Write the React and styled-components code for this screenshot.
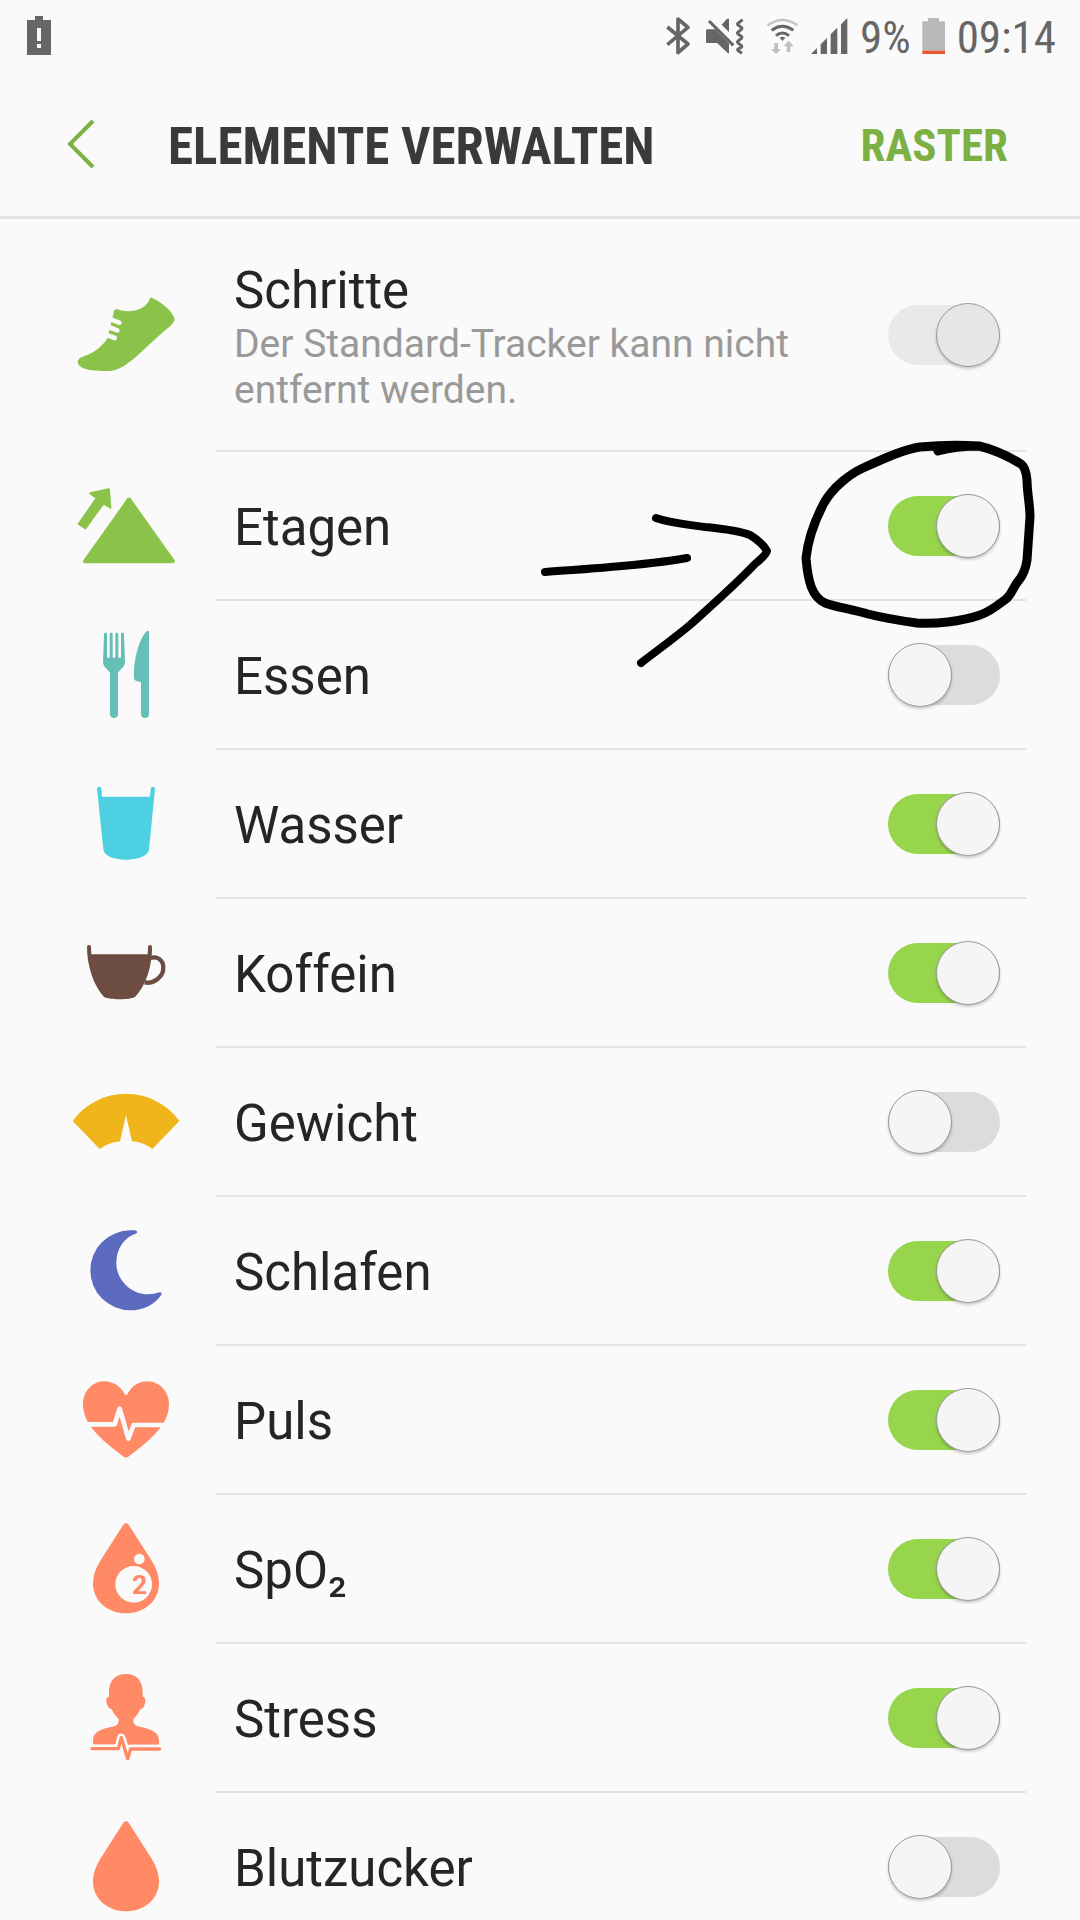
import React, { Component } from "react";
import styled, { createGlobalStyle } from "styled-components";

const GlobalStyle = createGlobalStyle`
  *,
  *::before {
    box-sizing: border-box;
  }
  body {
    margin: 0;
    background: #fafafa;
    font-family: Roboto, "Liberation Sans", sans-serif;
  }
`;

const Screen = styled.div`
  display: flex;
  flex-direction: column;
  height: 100vh;
  background: #fafafa;
  color: #252525;
`;

const StatusBar = styled.div`
  display: flex;
  align-items: center;
  justify-content: space-between;
  height: 72px;
  padding: 0 24px;
  flex-shrink: 0;
`;

const StatusGroup = styled.div`
  display: flex;
  align-items: center;
  gap: 11px;
`;

const StatusIcon = styled.svg`
  display: block;
  height: 40px;
`;

const StatusText = styled.span`
  padding-top: 4px;
  font-family: "Roboto Condensed", Roboto, sans-serif;
  font-size: 45px;
  line-height: 48px;
  color: #666;
`;

const Header = styled.header`
  display: flex;
  align-items: center;
  height: 147px;
  padding: 0 72px 0 48px;
  border-bottom: 3px solid #e5e5e5;
  flex-shrink: 0;
`;

const BackButton = styled.button`
  display: flex;
  justify-content: center;
  width: 66px;
  margin-right: 54px;
  padding: 0;
  border: 0;
  background: none;
`;

const Title = styled.h1`
  flex: 1;
  margin: 0;
  padding-top: 6px;
  font-family: "Roboto Condensed", Roboto, sans-serif;
  font-size: 51px;
  font-weight: 700;
  line-height: 60px;
  color: #3a3a3a;
`;

const GridButton = styled.button`
  padding: 3px 0 0;
  border: 0;
  background: none;
  font-family: "Roboto Condensed", Roboto, sans-serif;
  font-size: 45px;
  font-weight: 700;
  line-height: 60px;
  color: #7cb043;
`;

const List = styled.ul`
  flex: 1;
  min-height: 0;
  margin: 0;
  padding: 0;
  list-style: none;
  overflow-y: auto;
  scrollbar-width: none;
`;

const Row = styled.li`
  position: relative;
  display: grid;
  grid-template-columns: 216px 1fr;
  padding-right: 54px;
`;

const IconCell = styled.div`
  display: flex;
  align-items: center;
  padding: 0 0 2px 72px;
`;

const TrackerIcon = styled.svg`
  display: block;
  width: 108px;
  height: 108px;
`;

const RowBody = styled.label`
  display: flex;
  align-items: center;
  justify-content: space-between;
  min-height: 149px;
  padding: 37px 26px 37px 18px;
  border-bottom: 2px solid #e4e4e4;
`;

const Labels = styled.span`
  flex: 1;
  display: flex;
  flex-direction: column;
  padding-top: 5px;
`;

const Name = styled.span`
  font-size: 51px;
  line-height: 60px;
`;

const Hint = styled.span`
  font-size: 39px;
  line-height: 46px;
  color: #999;
`;

const Switch = styled.input`
  appearance: none;
  display: flex;
  align-items: center;
  justify-content: flex-start;
  width: 112px;
  height: 60px;
  margin: 0;
  border-radius: 30px;
  background: #dcdcdc;
  flex-shrink: 0;

  &::before {
    content: "";
    width: 64px;
    height: 64px;
    border: 1px solid #9a9a9a;
    border-radius: 50%;
    background: #f5f5f5;
    box-shadow: 0 2px 3px rgba(0, 0, 0, 0.2);
    flex-shrink: 0;
  }

  &:checked {
    justify-content: flex-end;
    background: #97d54d;
  }

  &:disabled {
    background: #e9e9e9;
  }

  &:disabled::before {
    background: #e6e6e6;
  }
`;

// pen marks lie over the list, so they do not take part in the layout
const PenMarks = styled.svg`
  position: absolute;
  top: -22px;
  right: 40px;
  width: 500px;
  height: 240px;
  z-index: 1;
  pointer-events: none;
`;

const Shoe = () => (
  <TrackerIcon viewBox="96 32 324 324" fill="#8bc34a">
    <path d="M222 122Q224 115 231 117C262 128 316 126 330 84Q332 80 337 83C370 98 398 125 404 146Q403 158 384 173C350 200 310 240 285 262C262 281 236 299 215 301C170 304 114 300 113 275C116 254 150 262 185 225Q197 214 202 205Z" />
    <path
      d="M212 147L238 157M206 170L232 180M198 193L224 203"
      stroke="#fafafa"
      strokeWidth="14"
      strokeLinecap="round"
    />
  </TrackerIcon>
);

const Mountain = () => (
  <TrackerIcon viewBox="96 604 324 324" fill="#8bc34a">
    <path d="M130 869L262 683Q267 678 272 683L404 869Q406 877 398 878H135Q127 877 130 869Z" />
    <path d="M112 761L166 683L149 671Q146 667 150 665L205 653Q209 652 210 657L214 711Q213 716 209 713L191 702L137 777Z" />
  </TrackerIcon>
);

const Cutlery = () => (
  <TrackerIcon viewBox="96 32 324 324" fill="#65bfb7">
    <path d="M189 155L192 71a4.5 4.5 0 0 1 9 0V139a4 4 0 0 0 8 0V71a4.5 4.5 0 0 1 9 0V139a4 4 0 0 0 8 0V71a4.5 4.5 0 0 1 9 0V139a4 4 0 0 0 8 0V71a4.5 4.5 0 0 1 9 0L255 155C255 172 236 180 234 188V311a12 12 0 0 1-24 0V188C208 180 189 172 189 155Z" />
    <path d="M327 66V311a12 12 0 0 1-24 0V215C290 213 282 211 282 203C280 150 296 90 318 64Q327 58 327 66Z" />
  </TrackerIcon>
);

const Glass = () => (
  <TrackerIcon viewBox="96 478 324 324" fill="#4dd0e1">
    <path d="M171 535a6.5 6.5 0 0 1 13 0L186 558H330L332 535a6.5 6.5 0 0 1 13 0L327 715C325 738 290 747 258 747C226 747 192 738 190 715Z" />
  </TrackerIcon>
);

const Cup = () => (
  <TrackerIcon viewBox="96 26 324 324" fill="#6d4c41">
    <path d="M141 110a6 6 0 0 1 12 0L154 132H323L324 110a6 6 0 0 1 12 0C337 170 315 230 285 260C270 269 208 269 192 260C160 225 141 165 141 110Z" />
    <path
      d="M332 143C350 137 370 147 370 172C370 200 340 222 314 216"
      fill="none"
      stroke="#6d4c41"
      strokeWidth="13"
    />
  </TrackerIcon>
);

const Scale = () => (
  <TrackerIcon viewBox="96 472 324 324" fill="#f0b51a">
    <path d="M98 631A197 197 0 0 1 418 631L337 715Q310 694 276 692L258 614L240 692Q205 696 179 715Z" />
  </TrackerIcon>
);

const Moon = () => (
  <TrackerIcon viewBox="96 20 324 324" fill="#5c6bc0">
    <path d="M286 60Q294 63 290 69C250 82 229 118 229 158C229 210 275 252 322 252Q341 252 359 246Q367 245 364 253C345 282 310 300 271 300A120 120 0 0 1 271 60Z" />
  </TrackerIcon>
);

const Heart = () => (
  <TrackerIcon viewBox="96 466 324 324" fill="#ff8a65">
    <path d="M253 549C242 528 220 512 192 512C155 512 129 545 129 580C129 640 180 684 249 737Q258 744 267 737C336 684 387 640 387 580C387 545 360 512 322 512C295 512 274 528 263 549Q258 556 253 549Z" />
    <path
      d="M130 641H224L239 594L265 684L281 643H386"
      fill="none"
      stroke="#fafafa"
      strokeWidth="14"
      strokeLinejoin="round"
    />
  </TrackerIcon>
);

const dropPath =
  "M250 73Q258 65 266 73L335 181C350 206 357 228 357 250C357 303 310 339 258 339C206 339 159 303 159 250C159 228 166 206 181 181Z";

const OxygenDrop = () => (
  <TrackerIcon viewBox="96 44 324 324" fill="#ff8a65">
    <path d={dropPath} />
    <circle cx="298" cy="176" r="16" fill="#fafafa" />
    <circle cx="281" cy="252" r="55" fill="#fafafa" />
    <text x="276" y="282" fontFamily="Roboto, sans-serif" fontSize="80" fontWeight="700">
      2
    </text>
  </TrackerIcon>
);

const Drop = () => (
  <TrackerIcon viewBox="96 44 324 324" fill="#ff8a65">
    <path d={dropPath} />
  </TrackerIcon>
);

const Person = () => (
  <TrackerIcon viewBox="96 490 324 324" fill="#ff8a65">
    <path d="M258 520C290 520 308 540 308 575V588Q317 588 316 602Q314 624 301 626Q295 642 280 656Q278 670 290 676C325 684 357 690 357 720V732H159V720C159 690 190 684 226 676Q238 670 236 656Q221 642 215 626Q202 624 199 602Q198 588 207 588V575C207 540 226 520 258 520Z" />
    <path
      d="M156 744H235L244 711L263 774L272 745H359"
      fill="none"
      stroke="#fafafa"
      strokeWidth="25"
      strokeLinejoin="round"
    />
    <path
      d="M156 744H235L244 711L263 774L272 745H359"
      fill="none"
      stroke="#ff8a65"
      strokeWidth="10"
      strokeLinejoin="round"
      strokeLinecap="round"
    />
  </TrackerIcon>
);

const trackers = [
  {
    id: "steps",
    name: "Schritte",
    hint: "Der Standard-Tracker kann nicht entfernt werden.",
    icon: Shoe,
    on: true,
    locked: true
  },
  { id: "floors", name: "Etagen", icon: Mountain, on: true, marked: true },
  { id: "food", name: "Essen", icon: Cutlery, on: false },
  { id: "water", name: "Wasser", icon: Glass, on: true },
  { id: "caffeine", name: "Koffein", icon: Cup, on: true },
  { id: "weight", name: "Gewicht", icon: Scale, on: false },
  { id: "sleep", name: "Schlafen", icon: Moon, on: true },
  { id: "pulse", name: "Puls", icon: Heart, on: true },
  { id: "spo2", name: "SpO₂", icon: OxygenDrop, on: true },
  { id: "stress", name: "Stress", icon: Person, on: true },
  { id: "sugar", name: "Blutzucker", icon: Drop, on: false }
];

const Marks = () => (
  <PenMarks
    viewBox="540 430 500 240"
    fill="none"
    stroke="#000"
    strokeWidth="8"
    strokeLinecap="round"
    strokeLinejoin="round"
    aria-hidden="true"
  >
    <path
      d="M938 451C952 447 968 446 979 446C992 449 1008 456 1021 464Q1026 468 1027 480C1027 492 1030 505 1030 517C1029 530 1028 545 1027 560Q1025 573 1019 580C1013 587 1012 594 1006 599C998 605 990 612 980 615C960 622 935 624 917 623C895 620 880 617 868 614C850 609 836 607 825 603C812 597 808 582 806 558C808 540 815 520 824 503C833 487 850 474 863 468C885 458 905 449 920 447Q950 444 979 446"
      strokeWidth="9"
    />
    <path d="M545 572C570 570 590 569 610 567C635 565 665 562 687 558" />
    <path d="M656 518C670 523 690 525 705 527C725 529 740 531 750 535C758 540 764 545 767 551Q766 555 755 564C735 585 710 607 690 625C672 640 655 652 641 663" />
  </PenMarks>
);

const StatusIcons = () => (
  <StatusGroup>
    <StatusIcon viewBox="72 48 93 120" width="31">
      <path
        d="M82 81L144 132L114 158V57L144 82L82 134"
        fill="none"
        stroke="#666"
        strokeWidth="11"
        strokeLinejoin="round"
      />
    </StatusIcon>
    <StatusIcon viewBox="198 48 123 120" width="41" fill="#666">
      <path d="M202 88H226L267 130V160H264L231 129H202Q198 129 198 125V92Q198 88 202 88ZM245 74L261 56H267V96Z" />
      <path
        d="M207 63L280 136M308 59L294 70Q291 72 294 75L304 82Q307 85 304 88L294 96Q291 99 294 102L304 109Q307 112 304 115L294 123Q291 126 294 129L304 137Q307 140 304 142L294 147Q291 150 295 152L306 160"
        fill="none"
        stroke="#666"
        strokeWidth="9"
      />
    </StatusIcon>
    <StatusIcon viewBox="354 48 126 120" width="42" fill="#666">
      <path d="M383 76Q427 44 472 76" fill="none" stroke="#c4c4c4" strokeWidth="8" />
      <path
        d="M395 91Q427 67 460 91M408 107Q427 91 447 107"
        fill="none"
        stroke="#666"
        strokeWidth="9"
      />
      <path d="M419 113Q427 108 436 113L427 123Z" />
      <path
        d="M403 129H414V147H423L408 163L394 147H403ZM446 122L461 139H451V156H440V139H431Z"
        fill="#c0c0c0"
      />
    </StatusIcon>
    <StatusIcon viewBox="512 48 114 120" width="38" fill="#666">
      <path d="M512 162L530 144V162ZM541 133L560 114V162H541ZM571 103L591 83V162H571ZM602 73L621 54V162H602Z" />
    </StatusIcon>
    <StatusText>9%</StatusText>
    <StatusIcon viewBox="843 48 72 120" width="24">
      <path d="M861 54H894V64H912V152H844V64H861Z" fill="#b8b8b8" />
      <path d="M844 152H912V162H844Z" fill="#e8562a" />
    </StatusIcon>
    <StatusText>09:14</StatusText>
  </StatusGroup>
);

export default class App extends Component {
  state = {
    items: trackers
  };

  toggle = id => {
    this.setState(state => ({
      items: state.items.map(item =>
        item.id === id ? { ...item, on: !item.on } : item
      )
    }));
  };

  render() {
    return (
      <Screen>
        <GlobalStyle />
        <StatusBar>
          <StatusIcon viewBox="0 0 30 40" width="30">
            <path d="M11 0H19V4H27V39H3V4H11Z" fill="#666" />
            <path d="M13 12H17V25H13ZM13 28H17V32H13Z" fill="#fafafa" />
          </StatusIcon>
          <StatusIcons />
        </StatusBar>
        <Header>
          <BackButton aria-label="Zurück">
            <svg width="30" height="50" viewBox="0 0 30 50">
              <path d="M27 2L4 25L27 48" fill="none" stroke="#7cb043" strokeWidth="4" />
            </svg>
          </BackButton>
          <Title>ELEMENTE VERWALTEN</Title>
          <GridButton>RASTER</GridButton>
        </Header>
        <List>
          {this.state.items.map(item => {
            const Icon = item.icon;
            return (
              <Row key={item.id}>
                <IconCell>
                  <Icon />
                </IconCell>
                <RowBody htmlFor={item.id}>
                  <Labels>
                    <Name>{item.name}</Name>
                    {item.hint && <Hint>{item.hint}</Hint>}
                  </Labels>
                  <Switch
                    type="checkbox"
                    id={item.id}
                    checked={item.on}
                    disabled={item.locked}
                    onChange={() => this.toggle(item.id)}
                  />
                </RowBody>
                {item.marked && <Marks />}
              </Row>
            );
          })}
        </List>
      </Screen>
    );
  }
}
